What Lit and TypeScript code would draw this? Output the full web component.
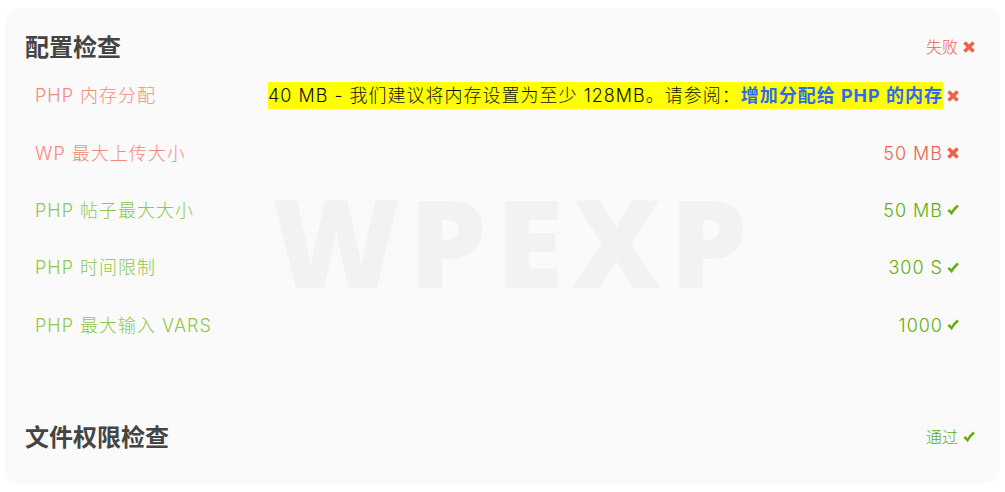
import { LitElement, html, css, svg } from "lit";
import { customElement, property } from "lit/decorators.js";

type Status = "pass" | "fail";

interface Check {
  label: string;
  value: string;
  status: Status;
  link?: string;
}

const CHECKS: Check[] = [
  {
    label: "PHP 内存分配",
    value: "40 MB - 我们建议将内存设置为至少 128MB。请参阅：",
    link: "增加分配给 PHP 的内存",
    status: "fail",
  },
  { label: "WP 最大上传大小", value: "50 MB", status: "fail" },
  { label: "PHP 帖子最大大小", value: "50 MB", status: "pass" },
  { label: "PHP 时间限制", value: "300 S", status: "pass" },
  { label: "PHP 最大输入 VARS", value: "1000", status: "pass" },
];

@customElement("status-icon")
export class StatusIcon extends LitElement {
  @property() status: Status = "pass";

  static styles = css`
    :host {
      display: block;
      width: 12px;
      height: 12px;
      flex: none;
    }
    .icon {
      display: block;
      width: 12px;
      height: 12px;
      fill: none;
    }
    .fail {
      stroke: #f0614c;
      stroke-width: 3.5;
    }
    .pass {
      stroke: #62ae0c;
      stroke-width: 2.6;
    }
  `;

  render() {
    const shape =
      this.status === "fail"
        ? svg`<path d="M1.5 1.5 10.5 10.5M10.5 1.5 1.5 10.5" />`
        : svg`<path d="M1.4 5.8 4.6 9 Q7 4.6 11 1.4" />`;
    return html`<svg class="icon ${this.status}" viewBox="0 0 12 12" aria-hidden="true">${shape}</svg>`;
  }
}

@customElement("app-root")
export class AppRoot extends LitElement {
  static styles = css`
    :host {
      display: block;
      padding: 8px 5px;
      font-family: Inter, "Noto Sans CJK SC", sans-serif;
      font-weight: 300;
      color: #444;
    }
    .card {
      position: relative;
      padding: 20px 20px 27px;
      border-radius: 14px;
      background: #fafafa;
    }
    .watermark {
      position: absolute;
      inset: 0;
      display: flex;
      align-items: center;
      justify-content: center;
      padding: 0 0 10px 24px;
      font-family: "Open Sans", sans-serif;
      font-size: 123px;
      font-weight: 800;
      letter-spacing: 9px;
      color: #f2f2f2;
      pointer-events: none;
    }
    .section {
      position: relative;
    }
    .head {
      display: flex;
      align-items: center;
      justify-content: space-between;
      padding-right: 5px;
    }
    .title {
      margin: 0;
      font-family: "Open Sans", "Noto Sans CJK SC", sans-serif;
      font-size: 24px;
      line-height: 38px;
      font-weight: 700;
    }
    .summary {
      display: flex;
      align-items: center;
      gap: 5px;
      font-size: 16px;
      line-height: 24px;
    }
    .list {
      display: grid;
      grid-auto-rows: 1fr;
      min-height: 287px;
      margin: 0 0 64px;
      padding: 1px 21px 0 10px;
      font-size: 18px;
      line-height: 27px;
      letter-spacing: 1px;
    }
    .row {
      display: flex;
      align-items: center;
      justify-content: space-between;
      gap: 16px;
    }
    .label,
    .value {
      margin: 0;
    }
    .value {
      display: flex;
      align-items: center;
      gap: 4px;
    }
    .fail .label {
      color: #f38b7b;
    }
    .pass .label {
      color: #8fc74a;
    }
    .fail .value,
    .summary.fail {
      color: #f0614c;
    }
    .pass .value,
    .summary.pass {
      color: #62ae0c;
    }
    .mark {
      background: #ff0;
      color: #111;
    }
    .link {
      color: #2f6bf0;
      font-weight: 700;
      text-decoration: none;
    }
  `;

  private renderHead(title: string, status: Status) {
    return html`
      <header class="head">
        <h2 class="title">${title}</h2>
        <span class="summary ${status}">
          ${status === "fail" ? "失败" : "通过"}
          <status-icon .status=${status}></status-icon>
        </span>
      </header>
    `;
  }

  private renderCheck(check: Check) {
    const text = check.link
      ? html`<mark class="mark">${check.value}<a class="link" href="#memory">${check.link}</a></mark>`
      : html`<span>${check.value}</span>`;
    return html`
      <div class="row ${check.status}">
        <dt class="label">${check.label}</dt>
        <dd class="value">${text}<status-icon .status=${check.status}></status-icon></dd>
      </div>
    `;
  }

  render() {
    return html`
      <main class="card">
        <div class="watermark" aria-hidden="true">WPEXP</div>
        <section class="section">
          ${this.renderHead("配置检查", "fail")}
          <dl class="list">${CHECKS.map((c) => this.renderCheck(c))}</dl>
        </section>
        <section class="section">${this.renderHead("文件权限检查", "pass")}</section>
      </main>
    `;
  }
}
